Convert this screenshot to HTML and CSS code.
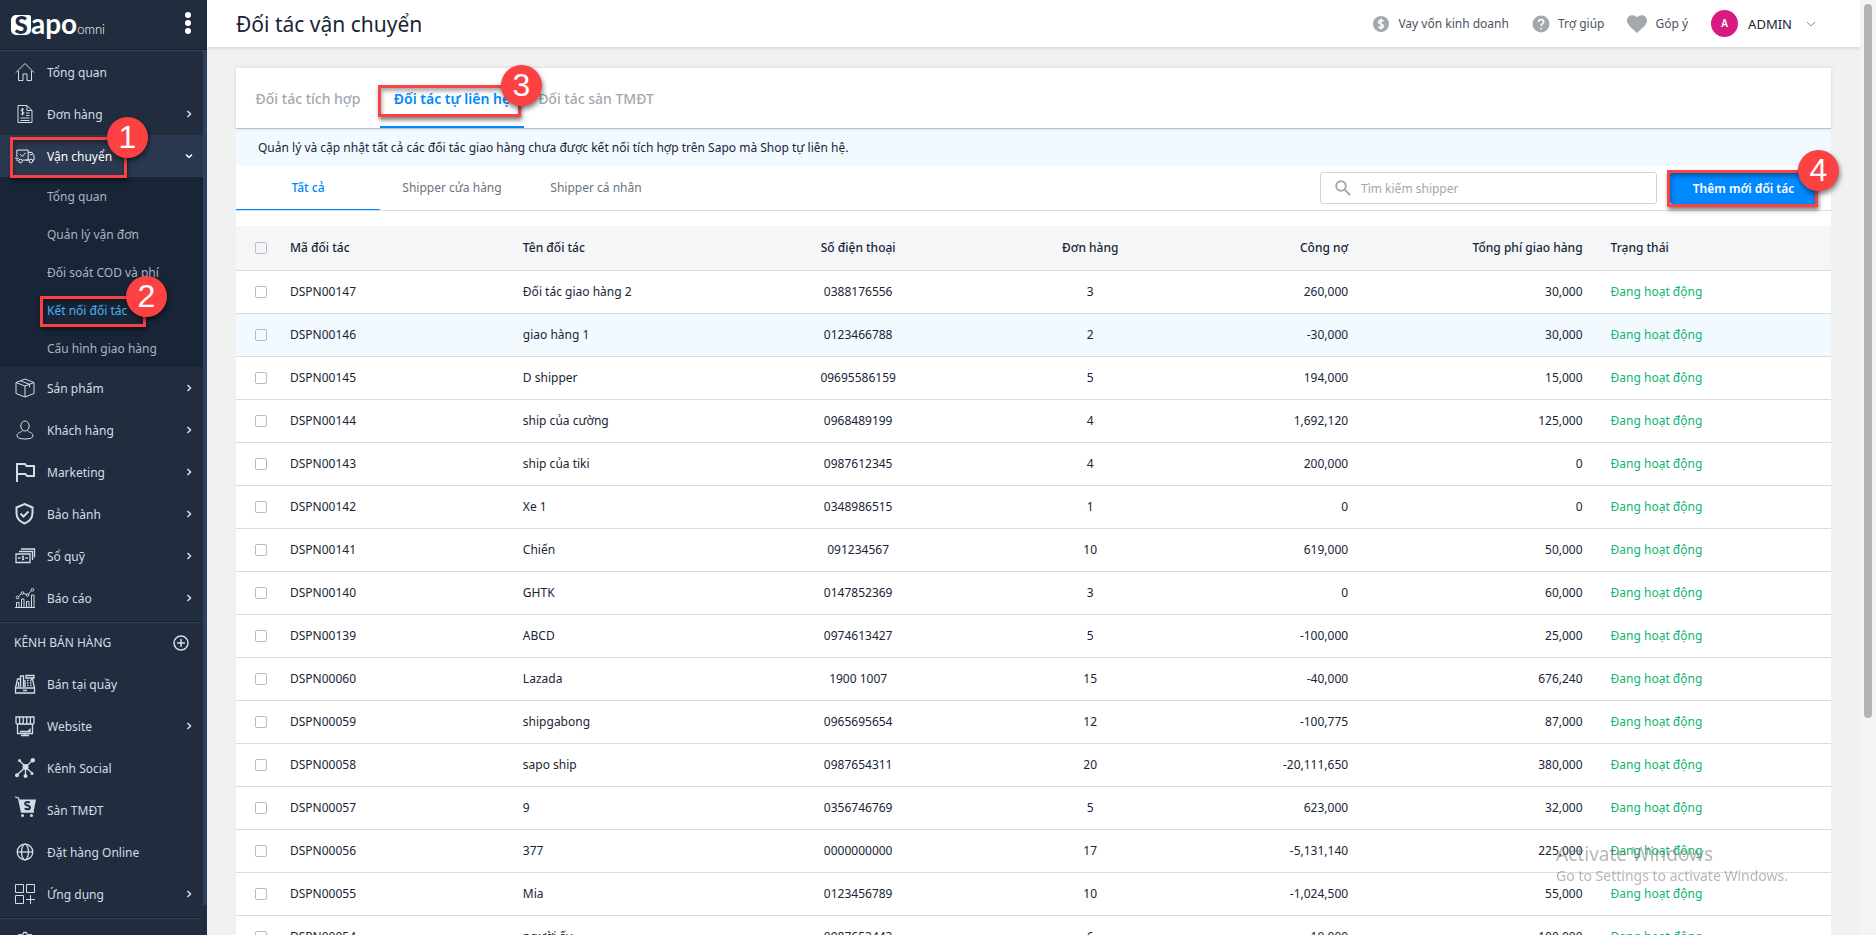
FILE: index.html
```
<!DOCTYPE html>
<html lang="vi">
<head>
  <meta charset="UTF-8">
  <meta name="viewport" content="width=device-width, initial-scale=1.0">
  <title>Đối tác vận chuyển</title>
  <link rel="stylesheet" href="styles.css">
</head>
<body>
  <aside class="sidebar">
    <div class="brand">
      <a href="#" class="logo" aria-label="Sapo omni"><span class="logo-box">S</span><span class="logo-name">apo</span><span class="logo-sub">omni</span></a>
      <button class="dots" aria-label="Menu"><i></i><i></i><i></i></button>
    </div>

    <nav class="menu">
      <a href="#" class="menu-item">
        <svg class="icon" viewBox="0 0 20 20"><path d="M1 10.500 10 1.500l9 9M3.500 9v9.500h4.500v-6.500h4v6.500h4.500V9"/></svg>
        <span>Tổng quan</span>
      </a>
      <a href="#" class="menu-item">
        <svg class="icon" viewBox="0 0 20 20"><path d="M3 1.500h9l5 5v12H3zM12 1.500v5h5M5.500 14h9M5.500 16.500h9M11 9h3.500M11 11.500h3.500M9 5.500c-1-1-3-.6-3 .8 0 1.700 3 1 3 2.700 0 1.500-2.200 1.800-3.200.8M7.500 4v7.500"/></svg>
        <span>Đơn hàng</span>
        <svg class="arrow" viewBox="0 0 8 8"><path d="M2.500 1l3 3-3 3"/></svg>
      </a>

      <div class="menu-group">
        <a href="#" class="menu-item open">
          <svg class="icon" viewBox="0 0 22 20"><path d="M2 11V3.500h12.500v11H8.500M14.500 6h4l2.500 4v4.500h-1.500M16.500 8.500h2.500M0 12.500h4M1 14.500h2.500M12 14.500h3M5.500 8l2.500 2.500 3.500-4"/><circle cx="6" cy="15.500" r="2"/><circle cx="17.500" cy="15.500" r="2"/></svg>
          <span>Vận chuyển</span>
          <svg class="arrow" viewBox="0 0 8 8"><path d="M1 2.500l3 3 3-3"/></svg>
        </a>
        <div class="mark mark-menu"><b>1</b></div>
      </div>

      <div class="submenu">
        <a href="#">Tổng quan</a>
        <a href="#">Quản lý vận đơn</a>
        <a href="#">Đối soát COD và phí</a>
        <div class="menu-group">
          <a href="#" class="current">Kết nối đối tác</a>
          <div class="mark mark-submenu"><b>2</b></div>
        </div>
        <a href="#">Cấu hình giao hàng</a>
      </div>

      <a href="#" class="menu-item">
        <svg class="icon" viewBox="0 0 20 20"><path d="M10 1l9 3.500v11L10 19l-9-3.500v-11zM1 4.500 10 8l9-3.500M10 8v11M5.500 2.800l9 3.500v3"/></svg>
        <span>Sản phẩm</span>
        <svg class="arrow" viewBox="0 0 8 8"><path d="M2.500 1l3 3-3 3"/></svg>
      </a>
      <a href="#" class="menu-item">
        <svg class="icon" viewBox="0 0 20 20"><ellipse cx="10" cy="6" rx="4.200" ry="5"/><path d="M7.500 10.500c-.5 2-5.500 1.500-5.500 5.500 0 4 16 4 16 0s-5-3.500-5.500-5.500"/></svg>
        <span>Khách hàng</span>
        <svg class="arrow" viewBox="0 0 8 8"><path d="M2.500 1l3 3-3 3"/></svg>
      </a>
      <a href="#" class="menu-item">
        <svg class="icon bold" viewBox="0 0 20 20"><path d="M2 20V2h8l1.500 2H19v10h-7l-1.500-2H2"/></svg>
        <span>Marketing</span>
        <svg class="arrow" viewBox="0 0 8 8"><path d="M2.500 1l3 3-3 3"/></svg>
      </a>
      <a href="#" class="menu-item">
        <svg class="icon bold" viewBox="0 0 20 20"><path d="M9.500 0l8 3.500V9c0 5-3 8.500-8 10.500C4.500 17.500 1.500 14 1.500 9V3.500zM5.500 9.500l3 3 5-5"/></svg>
        <span>Bảo hành</span>
        <svg class="arrow" viewBox="0 0 8 8"><path d="M2.500 1l3 3-3 3"/></svg>
      </a>
      <a href="#" class="menu-item">
        <svg class="icon thick" viewBox="0 0 20 20"><path d="M1 8h14v8.500H1zM4 5.500h13.500V14M6 3h13.500v8.500M3 12h2.500M10.500 12H13M9 10.500c-2-.8-2 1.300-1 1.500s1 2-1 1.500"/></svg>
        <span>Sổ quỹ</span>
        <svg class="arrow" viewBox="0 0 8 8"><path d="M2.500 1l3 3-3 3"/></svg>
      </a>
      <a href="#" class="menu-item">
        <svg class="icon" viewBox="0 0 20 20"><path d="M0 19.500h20M1.500 19.500v-5h2.500v5M6.500 19.500v-8.500h2.500v8.500M11.500 19.500v-6h2.500v6M16.500 19.500V7H19v12.500M3.500 8.500l2.500-2.500M8.800 5.500l2.700 1M13.500 6l3-3.500"/><circle cx="2.500" cy="9.500" r="1.300"/><circle cx="7.500" cy="5" r="1.300"/><circle cx="12.500" cy="7" r="1.300"/><circle cx="17.500" cy="1.800" r="1.300"/></svg>
        <span>Báo cáo</span>
        <svg class="arrow" viewBox="0 0 8 8"><path d="M2.500 1l3 3-3 3"/></svg>
      </a>

      <div class="menu-title">
        <span>KÊNH BÁN HÀNG</span>
        <button class="add-channel" aria-label="Thêm kênh"><svg viewBox="0 0 16 16"><circle cx="8" cy="8" r="7"/><path d="M8 4v8M4 8h8"/></svg></button>
      </div>

      <a href="#" class="menu-item">
        <svg class="icon thick" viewBox="0 0 20 20"><path d="M.5 14h19v5H.5zM.5 14l2-9H5M16 5h1.500l2 9M8 16.500h4M5.500 13V2h3v11M11 1.500h8v2.500h-8zM12 6.500h1.500M15 6.500h1.500M12 9h1.500M15 9h1.500M12 11.500h1.500M15 11.500h1.500M3.500 8v5M10 6v7"/></svg>
        <span>Bán tại quầy</span>
      </a>
      <a href="#" class="menu-item">
        <svg class="icon thick" viewBox="0 0 20 20"><path d="M1 1h18v5c0 3-3.600 3-3.600 0 0 3-3.600 3-3.600 0 0 3-3.600 3-3.600 0 0 3-3.600 3-3.600 0 0 3-3.600 3-3.600 0zM4.600 1v5M8.200 1v5M11.800 1v5M15.400 1v5M2.500 9v8.500h15V9M10 17.500v2M6 19.500h8M5 15.500h8l2-2v2z"/></svg>
        <span>Website</span>
        <svg class="arrow" viewBox="0 0 8 8"><path d="M2.500 1l3 3-3 3"/></svg>
      </a>
      <a href="#" class="menu-item">
        <svg class="icon solid" viewBox="0 0 20 20"><path class="line" d="M5 3l5.500 6L17.500 2.500M10.500 9v9M10.500 9l-8.500 8M10.500 9l6.500 6"/><circle cx="10.500" cy="9" r="3"/><circle cx="4.500" cy="2.500" r="1.500"/><circle cx="17.800" cy="2.300" r="2.200"/><circle cx="2" cy="17.300" r="2"/><circle cx="10.500" cy="18" r="2"/><circle cx="17" cy="15.500" r="1.500"/></svg>
        <span>Kênh Social</span>
      </a>
      <a href="#" class="menu-item">
        <svg class="icon solid cart" viewBox="0 0 20 20"><path class="line" d="M0 0l3.500 1 3 14H19"/><path d="M4 2.500h17L18.500 15h-12z"/><circle cx="7.500" cy="18.500" r="1.500"/><circle cx="16.500" cy="18.500" r="1.500"/><path class="cut" d="M14.800 5.800c-1.600-1.400-4.800-1-4.800 1 0 2.200 5 1.300 5 3.600 0 2.200-3.600 2.400-5.200.8"/></svg>
        <span>Sàn TMĐT</span>
      </a>
      <a href="#" class="menu-item">
        <svg class="icon thick" viewBox="0 0 20 20"><circle cx="10" cy="10" r="7.800"/><ellipse cx="10" cy="10" rx="3.500" ry="7.800"/><path d="M2.200 10h15.600"/></svg>
        <span>Đặt hàng Online</span>
      </a>
      <a href="#" class="menu-item">
        <svg class="icon" viewBox="0 0 20 20"><path d="M.5.5h8v8h-8zM11.500.5h8v8h-8zM.5 11.500h8v8h-8zM15.500 11v9M11 15.500h9"/></svg>
        <span>Ứng dụng</span>
        <svg class="arrow" viewBox="0 0 8 8"><path d="M2.500 1l3 3-3 3"/></svg>
      </a>

      <div class="menu-footer">
        <a href="#" class="menu-item" aria-label="Cấu hình">
          <svg class="icon thick" viewBox="0 0 20 20"><circle cx="10" cy="10" r="3"/><path d="M2 6l2-2.500 2 .5 2-1 .8-1.500h2.400L12 3l2 1 2-.5L18 6l-1 2 .5 2L19 12l-2 4-3 1-2 2H8l-2-2-3-1-2-4 1.500-2L3 8z"/></svg>
        </a>
      </div>
    </nav>
  </aside>

  <div class="page">
    <header class="topbar">
      <h1>Đối tác vận chuyển</h1>
      <a href="#" class="top-link">
        <svg class="top-icon" viewBox="0 0 18 18"><circle cx="9" cy="9" r="8"/><path class="cut" d="M11.500 6.300C10 4.500 6.500 5 6.500 7c0 2.300 5 1.500 5 4 0 2.200-3.800 2.400-5.300.7M9 3.500v11"/></svg>
        Vay vốn kinh doanh
      </a>
      <a href="#" class="top-link">
        <svg class="top-icon" viewBox="0 0 18 18"><circle cx="9" cy="9" r="8.500"/><path class="cut" d="M6.500 7c0-3.500 5.200-3.300 5.200-.2C11.700 8.800 9 8.800 9 11M9 12.800v1.800"/></svg>
        Trợ giúp
      </a>
      <a href="#" class="top-link">
        <svg class="top-icon heart" viewBox="0 0 20 18"><path d="M10 18C4 12.500 0 9.500 0 5.500 0 0 7-1.500 10 2.500 13-1.500 20 0 20 5.500c0 4-4 7-10 12.500z"/></svg>
        Góp ý
      </a>
      <button class="account">
        <span class="avatar">A</span>
        ADMIN
        <svg viewBox="0 0 10 6"><path d="M1 1l4 4 4-4"/></svg>
      </button>
    </header>

    <main class="content">
      <nav class="tabs">
        <a href="#" class="tab">Đối tác tích hợp</a>
        <a href="#" class="tab active">Đối tác tự liên hệ</a>
        <a href="#" class="tab">Đối tác sàn TMĐT</a>
        <div class="mark mark-tab"><b>3</b></div>
      </nav>

      <p class="note">Quản lý và cập nhật tất cả các đối tác giao hàng chưa được kết nối tích hợp trên Sapo mà Shop tự liên hệ.</p>

      <div class="filters">
        <a href="#" class="filter active">Tất cả</a>
        <a href="#" class="filter">Shipper cửa hàng</a>
        <a href="#" class="filter">Shipper cá nhân</a>
        <label class="search">
          <svg viewBox="0 0 16 16"><circle cx="6" cy="6" r="4.800"/><path d="M9.500 9.500l5.500 5.500"/></svg>
          <input type="text" placeholder="Tìm kiếm shipper" aria-label="Tìm kiếm shipper">
        </label>
        <div class="add-wrap">
          <button class="add-partner">Thêm mới đối tác</button>
          <div class="mark mark-button"><b>4</b></div>
        </div>
      </div>

      <table class="partners">
        <colgroup>
          <col class="col-check">
          <col class="col-code">
          <col class="col-name">
          <col class="col-phone">
          <col class="col-orders">
          <col class="col-debt">
          <col class="col-fee">
          <col>
        </colgroup>
        <thead>
          <tr>
            <th><input type="checkbox" aria-label="Chọn tất cả"></th>
            <th>Mã đối tác</th>
            <th>Tên đối tác</th>
            <th>Số điện thoại</th>
            <th>Đơn hàng</th>
            <th>Công nợ</th>
            <th>Tổng phí giao hàng</th>
            <th>Trạng thái</th>
          </tr>
        </thead>
        <tbody>
          <tr><td><input type="checkbox" aria-label="DSPN00147"></td><td>DSPN00147</td><td>Đối tác giao hàng 2</td><td>0388176556</td><td>3</td><td>260,000</td><td>30,000</td><td>Đang hoạt động</td></tr>
          <tr class="hover"><td><input type="checkbox" aria-label="DSPN00146"></td><td>DSPN00146</td><td>giao hàng 1</td><td>0123466788</td><td>2</td><td>-30,000</td><td>30,000</td><td>Đang hoạt động</td></tr>
          <tr><td><input type="checkbox" aria-label="DSPN00145"></td><td>DSPN00145</td><td>D shipper</td><td>09695586159</td><td>5</td><td>194,000</td><td>15,000</td><td>Đang hoạt động</td></tr>
          <tr><td><input type="checkbox" aria-label="DSPN00144"></td><td>DSPN00144</td><td>ship của cường</td><td>0968489199</td><td>4</td><td>1,692,120</td><td>125,000</td><td>Đang hoạt động</td></tr>
          <tr><td><input type="checkbox" aria-label="DSPN00143"></td><td>DSPN00143</td><td>ship của tiki</td><td>0987612345</td><td>4</td><td>200,000</td><td>0</td><td>Đang hoạt động</td></tr>
          <tr><td><input type="checkbox" aria-label="DSPN00142"></td><td>DSPN00142</td><td>Xe 1</td><td>0348986515</td><td>1</td><td>0</td><td>0</td><td>Đang hoạt động</td></tr>
          <tr><td><input type="checkbox" aria-label="DSPN00141"></td><td>DSPN00141</td><td>Chiến</td><td>091234567</td><td>10</td><td>619,000</td><td>50,000</td><td>Đang hoạt động</td></tr>
          <tr><td><input type="checkbox" aria-label="DSPN00140"></td><td>DSPN00140</td><td>GHTK</td><td>0147852369</td><td>3</td><td>0</td><td>60,000</td><td>Đang hoạt động</td></tr>
          <tr><td><input type="checkbox" aria-label="DSPN00139"></td><td>DSPN00139</td><td>ABCD</td><td>0974613427</td><td>5</td><td>-100,000</td><td>25,000</td><td>Đang hoạt động</td></tr>
          <tr><td><input type="checkbox" aria-label="DSPN00060"></td><td>DSPN00060</td><td>Lazada</td><td>1900 1007</td><td>15</td><td>-40,000</td><td>676,240</td><td>Đang hoạt động</td></tr>
          <tr><td><input type="checkbox" aria-label="DSPN00059"></td><td>DSPN00059</td><td>shipgabong</td><td>0965695654</td><td>12</td><td>-100,775</td><td>87,000</td><td>Đang hoạt động</td></tr>
          <tr><td><input type="checkbox" aria-label="DSPN00058"></td><td>DSPN00058</td><td>sapo ship</td><td>0987654311</td><td>20</td><td>-20,111,650</td><td>380,000</td><td>Đang hoạt động</td></tr>
          <tr><td><input type="checkbox" aria-label="DSPN00057"></td><td>DSPN00057</td><td>9</td><td>0356746769</td><td>5</td><td>623,000</td><td>32,000</td><td>Đang hoạt động</td></tr>
          <tr><td><input type="checkbox" aria-label="DSPN00056"></td><td>DSPN00056</td><td>377</td><td>0000000000</td><td>17</td><td>-5,131,140</td><td>225,000</td><td>Đang hoạt động</td></tr>
          <tr><td><input type="checkbox" aria-label="DSPN00055"></td><td>DSPN00055</td><td>Mia</td><td>0123456789</td><td>10</td><td>-1,024,500</td><td>55,000</td><td>Đang hoạt động</td></tr>
          <tr><td><input type="checkbox" aria-label="DSPN00054"></td><td>DSPN00054</td><td>người ấy</td><td>0987653443</td><td>6</td><td>10,000</td><td>100,000</td><td>Đang hoạt động</td></tr>
        </tbody>
      </table>
    </main>
  </div>

  <div class="page-scroll"><div class="page-thumb"></div></div>

  <div class="watermark">
    <strong>Activate Windows</strong>
    <span>Go to Settings to activate Windows.</span>
  </div>
</body>
</html>
```
FILE: styles.css
```
:root {
  --primary: #0088FF;
  --success: #0FB473;
  --mark: #FC4142;
  --sidebar: #212D3F;
  --sidebar-dark: #182537;
  --text: #182537;
  --text-muted: #A3A8AF;
  --border: #DADCDE;
  --background: #F0F2F2;
}

* {
  box-sizing: border-box;
}

body {
  margin: 0;
  height: 100vh;
  overflow: hidden;
  display: flex;
  background-color: var(--background);
  color: var(--text);
  font-family: 'Noto Sans', 'Open Sans', sans-serif;
  font-size: 12px;
}

a {
  color: inherit;
  text-decoration: none;
}

button {
  font: inherit;
  border: none;
  background: none;
  padding: 0;
  cursor: pointer;
}

svg {
  fill: none;
  stroke: currentColor;
  flex-shrink: 0;
  overflow: visible;
}

/* Sidebar */
.sidebar {
  width: 207px;
  flex-shrink: 0;
  display: flex;
  flex-direction: column;
  background-color: var(--sidebar);
  color: #D3DCE8;
}

.brand {
  height: 51px;
  flex-shrink: 0;
  display: flex;
  justify-content: space-between;
  align-items: center;
  padding: 0 16px 4px 11px;
  border-bottom: 1px solid #2F4358;
  box-shadow: inset 0 -1px #152132;
}

.logo {
  display: flex;
  align-items: baseline;
  color: #FFFFFF;
}

.logo-box {
  width: 20px;
  height: 20px;
  border-radius: 5px 2px 5px 5px;
  background-color: #FFFFFF;
  color: var(--sidebar);
  font: 900 24px/20px Lato, sans-serif;
  text-align: center;
}

.logo-name {
  font: 700 28px/28px Lato, sans-serif;
}

.logo-sub {
  font: 300 13px/16px Lato, sans-serif;
}

.dots {
  display: flex;
  flex-direction: column;
  gap: 2px;
}

.dots i {
  width: 6px;
  height: 6px;
  border-radius: 50%;
  background-color: #FFFFFF;
}

.menu {
  flex: 1;
  min-height: 0;
  overflow: hidden;
  background: linear-gradient(#2B4162, #2B4162) right top / 4px 854px no-repeat;
  padding-right: 4px;
}

.menu-item {
  height: 42px;
  display: flex;
  align-items: center;
  gap: 12px;
  padding: 0 10px 0 15px;
}

.menu-item.open {
  background-color: #2A394F;
  color: #FFFFFF;
}

.icon {
  width: 20px;
  height: 20px;
}

.icon.thick {
  stroke-width: 1.3;
}

.icon.bold {
  stroke-width: 2;
}

.icon.solid {
  fill: currentColor;
  stroke: none;
}

.icon.cart {
  margin-bottom: 6px;
}

.icon .line {
  fill: none;
  stroke: currentColor;
  stroke-width: 1.3;
}

.icon .cut {
  fill: none;
  stroke: var(--sidebar);
  stroke-width: 2;
}

.arrow {
  width: 8px;
  height: 8px;
  margin-left: auto;
  stroke-width: 1.5;
}

.menu-group {
  position: relative;
}

.submenu {
  background-color: var(--sidebar-dark);
  color: #A9B4C4;
}

.submenu a {
  display: flex;
  align-items: center;
  height: 38px;
  padding-left: 47px;
}

.submenu .current {
  color: #4FB0F0;
}

.menu-title {
  height: 42px;
  margin-top: 2px;
  display: flex;
  justify-content: space-between;
  align-items: center;
  padding: 0 14px;
  border-top: 1px solid #152132;
  box-shadow: inset 0 1px #2F4358;
}

.add-channel {
  color: inherit;
  width: 16px;
  height: 16px;
}

.add-channel svg {
  display: block;
  stroke-width: 1.5;
}

.menu-footer {
  margin-top: 2px;
  padding-top: 2px;
  border-top: 1px solid #152132;
  box-shadow: inset 0 1px #2F4358;
}

/* Topbar */
.page {
  flex: 1;
  min-width: 0;
}

.topbar {
  height: 47px;
  display: flex;
  align-items: center;
  gap: 23px;
  padding: 0 44px 0 29px;
  background-color: #FFFFFF;
  box-shadow: 0 1px 4px rgba(0, 0, 0, 0.15);
}

.topbar h1 {
  margin: 0 auto 0 0;
  font-size: 21px;
  font-weight: 400;
}

.top-link {
  display: flex;
  align-items: center;
  gap: 8px;
  color: #4A5361;
}

.top-icon {
  width: 18px;
  height: 18px;
  fill: #A3A8AF;
  stroke: none;
}

.top-icon.heart {
  width: 20px;
}

.top-icon .cut {
  fill: none;
  stroke: #FFFFFF;
  stroke-width: 1.5;
}

.account {
  display: flex;
  align-items: center;
  gap: 10px;
  color: var(--text);
  font-size: 13px;
}

.account svg {
  width: 10px;
  height: 6px;
  margin-left: 4px;
  stroke: #8A9099;
}

.avatar {
  width: 27px;
  height: 27px;
  border-radius: 50%;
  background-color: #D81B80;
  color: #FFFFFF;
  font-size: 10px;
  font-weight: 600;
  line-height: 27px;
}

/* Content */
.content {
  margin: 21px 29px 0;
  background-color: #FFFFFF;
}

.tabs {
  position: relative;
  height: 61px;
  display: flex;
  border-bottom: 1px solid #B9C0C8;
  box-shadow: 0 0 4px rgba(0, 0, 0, 0.12);
}

.tab {
  display: flex;
  align-items: center;
  padding: 2px 12px 0;
  min-width: 144px;
  justify-content: center;
  border-bottom: 2px solid transparent;
  color: var(--text-muted);
  font-size: 14px;
  font-weight: 500;
}

.tab.active {
  border-bottom-color: var(--primary);
  color: var(--primary);
  font-weight: 600;
}

.note {
  margin: 0;
  padding: 0 22px;
  line-height: 37px;
  background-color: #F2F9FF;
}

.filters {
  height: 45px;
  display: flex;
  align-items: center;
  border-bottom: 1px solid var(--border);
  padding-right: 14px;
}

.filter {
  align-self: stretch;
  min-width: 144px;
  display: flex;
  align-items: center;
  justify-content: center;
  border-bottom: 1px solid transparent;
  color: #6B737E;
}

.filter.active {
  border-bottom-color: var(--primary);
  color: var(--primary);
  font-weight: 500;
}

.search {
  width: 337px;
  height: 32px;
  margin-left: auto;
  display: flex;
  align-items: center;
  gap: 10px;
  padding: 0 14px;
  border: 1px solid #D0D3D6;
  border-radius: 3px;
  color: var(--text-muted);
}

.search svg {
  width: 16px;
  height: 16px;
  stroke-width: 2;
}

.search input {
  flex: 1;
  min-width: 0;
  border: none;
  outline: none;
  padding: 0;
  font: inherit;
}

.search input::placeholder {
  color: var(--text-muted);
}

.add-wrap {
  position: relative;
  margin-left: 13px;
}

.add-partner {
  height: 32px;
  width: 147px;
  border-radius: 3px;
  background-color: var(--primary);
  color: #FFFFFF;
  font-weight: 600;
}

/* Table */
.partners {
  width: 100%;
  margin-top: 15px;
  table-layout: fixed;
  border-collapse: collapse;
}

.partners th,
.partners td {
  height: 43px;
  padding: 0 14px;
  border-bottom: 1px solid var(--border);
  text-align: left;
  font-weight: 400;
  white-space: nowrap;
}

.partners th {
  height: 44px;
  background-color: #F4F6F8;
  font-weight: 500;
}

.partners .hover {
  background-color: #F2F9FF;
}

.partners tr > :first-child {
  padding: 0 0 0 19px;
}

.partners tr > :nth-child(4),
.partners tr > :nth-child(5) {
  text-align: center;
}

.partners tr > :nth-child(6),
.partners tr > :nth-child(7) {
  text-align: right;
}

.partners td:last-child {
  color: var(--success);
}

.partners input {
  appearance: none;
  display: block;
  width: 12px;
  height: 12px;
  margin: 0;
  border: 1px solid #B8BCC0;
  border-radius: 2px;
}

.col-check { width: 40px; }
.col-code,
.col-name,
.col-phone { width: 14.6%; }
.col-orders { width: 14.5%; }
.col-debt { width: 9.8%; }
.col-fee { width: 14.7%; }

/* Numbered marks over the page */
.mark {
  position: absolute;
  z-index: 2;
  border: 3px solid var(--mark);
  box-shadow: 1px 3px 4px rgba(0, 0, 0, 0.5), inset 1px 3px 4px rgba(0, 0, 0, 0.35);
  pointer-events: none;
}

.mark b {
  position: absolute;
  top: -23px;
  right: -24px;
  width: 41px;
  height: 41px;
  border-radius: 50%;
  background-color: var(--mark);
  box-shadow: 1px 3px 5px rgba(0, 0, 0, 0.5);
  color: #FFFFFF;
  font: 400 32px/41px 'Liberation Sans', sans-serif;
  text-align: center;
}

.mark-menu {
  left: 10px;
  top: 2px;
  width: 117px;
  height: 41px;
}

.mark-submenu {
  left: 40px;
  top: 5px;
  width: 106px;
  height: 31px;
}

.mark-tab {
  left: 142px;
  top: 17px;
  width: 143px;
  height: 32px;
}

.mark-button {
  left: -3px;
  top: -2px;
  width: 151px;
  height: 37px;
}

/* Right scrollbar */
.page-scroll {
  width: 16px;
  flex-shrink: 0;
  padding: 4px;
  background-color: #F4F4F4;
}

.page-thumb {
  height: 77%;
  border-radius: 4px;
  background-color: #B4B4B4;
}

.watermark {
  position: fixed;
  right: 88px;
  bottom: 49px;
  display: flex;
  flex-direction: column;
  color: rgba(110, 110, 110, 0.5);
  font-size: 14px;
  line-height: 20px;
}

.watermark strong {
  font-size: 19px;
  font-weight: 400;
  line-height: 24px;
}
```
